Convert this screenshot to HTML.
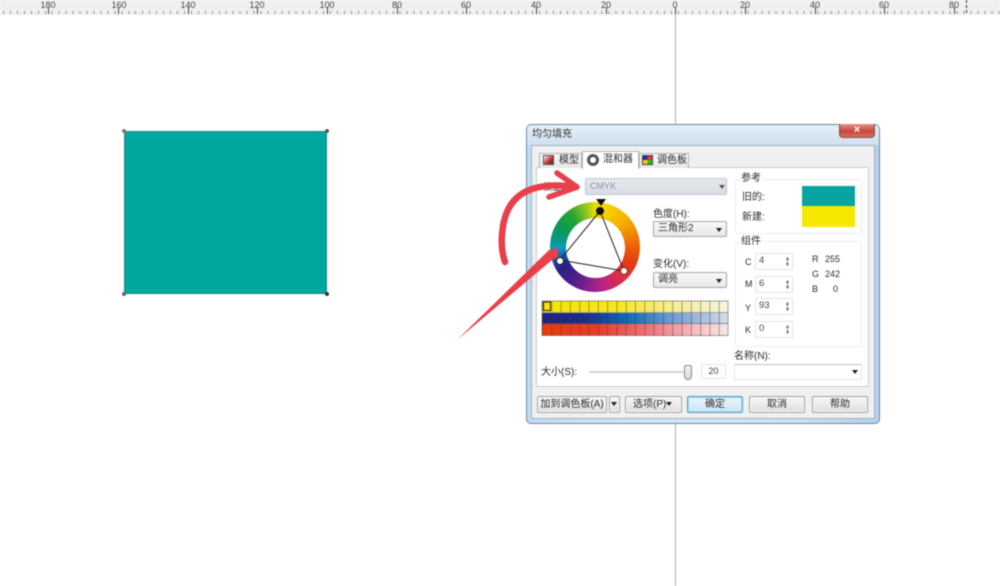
<!DOCTYPE html>
<html><head><meta charset="utf-8">
<style>
html,body{margin:0;padding:0;background:#fff;width:1000px;height:586px;overflow:hidden}
#w{position:relative;width:1000px;height:586px;overflow:hidden;font-family:"Liberation Sans","Noto Sans CJK SC",sans-serif;color:#333;filter:blur(.5px)}
#w div{position:absolute;box-sizing:border-box}
.t{font-size:10px;line-height:12px;white-space:nowrap;color:#2c2c2c}
.tick{background:repeating-linear-gradient(90deg,#666 0 1px,transparent 1px 6.96px)}
.rl{font-size:9px;line-height:10px;color:#444;font-family:"Liberation Sans",sans-serif;width:24px;text-align:center;top:0}
.maj{width:1px;height:7px;top:7px;background:#444}
.btn{border:1px solid #a2a2a2;border-radius:2px;background:linear-gradient(#f6f6f6,#ececec 50%,#dcdcdc);font-size:10px;line-height:15px;text-align:center;color:#2c2c2c;height:17px;top:396px;box-shadow:inset 0 0 0 1px #fafafa}
.combo{border:1px solid #a8a8a8;border-radius:2px;background:linear-gradient(#f8f8f8,#e8e8e8);font-size:10px;line-height:14px;padding-left:4px;color:#2c2c2c}
.ar{position:absolute;width:0;height:0;border-left:3px solid transparent;border-right:3px solid transparent;border-top:4px solid #222}
.spin{border:1px solid #e4e4e4;background:#fff;width:38px;height:17px;font-size:9.500px;line-height:13px;padding-left:3px;color:#444;font-family:"Liberation Sans",sans-serif}
.spin:after{content:"";position:absolute;right:3px;top:3px;width:3px;height:9px;background:#555;clip-path:polygon(50% 0,100% 30%,60% 30%,60% 70%,100% 70%,50% 100%,0 70%,40% 70%,40% 30%,0 30%)}
.g{border:1px solid #ececec;border-radius:3px;background:#fff}
</style></head><body><div id="w">

<!-- ruler -->
<div style="left:0;top:0;width:1000px;height:15px;background:#f0f0f0"></div>
<div class="tick" style="left:3px;top:11px;width:997px;height:3px;opacity:.7"></div>
<div class="maj" style="left:48px"></div><div class="rl" style="left:36px">180</div>
<div class="maj" style="left:118px"></div><div class="rl" style="left:107px">160</div>
<div class="maj" style="left:188px"></div><div class="rl" style="left:176px">140</div>
<div class="maj" style="left:257px"></div><div class="rl" style="left:245px">120</div>
<div class="maj" style="left:327px"></div><div class="rl" style="left:315px">100</div>
<div class="maj" style="left:397px"></div><div class="rl" style="left:385px">80</div>
<div class="maj" style="left:466px"></div><div class="rl" style="left:454px">60</div>
<div class="maj" style="left:536px"></div><div class="rl" style="left:524px">40</div>
<div class="maj" style="left:606px"></div><div class="rl" style="left:594px">20</div>
<div class="maj" style="left:675px"></div><div class="rl" style="left:663px">0</div>
<div class="maj" style="left:745px"></div><div class="rl" style="left:733px">20</div>
<div class="maj" style="left:815px"></div><div class="rl" style="left:803px">40</div>
<div class="maj" style="left:884px"></div><div class="rl" style="left:872px">60</div>
<div class="maj" style="left:954px"></div><div class="rl" style="left:942px">80</div>
<div style="left:966px;top:0;width:1px;height:13px;background:repeating-linear-gradient(#333 0 3px,transparent 3px 5px)"></div>

<!-- guide -->
<div style="left:675px;top:14px;width:1px;height:572px;background:#a9aeb3"></div>

<!-- teal rectangle -->
<div style="left:124px;top:131px;width:203px;height:163px;background:#00a8a0;border:1px solid #1f8a84"></div>
<div style="left:122px;top:129px;width:4px;height:4px;border-radius:50%;background:#777"></div>
<div style="left:325px;top:129px;width:4px;height:4px;border-radius:50%;background:#555"></div>
<div style="left:122px;top:292px;width:4px;height:4px;border-radius:50%;background:#666"></div>
<div style="left:325px;top:292px;width:4px;height:4px;border-radius:50%;background:#333"></div>

<!-- dialog -->
<div style="left:526px;top:124px;width:354px;height:300px;border:1px solid #6b8aa6;border-radius:5px;background:linear-gradient(90deg,#c4dcf0,#d5e6f4 40%,#cfe2f2 75%,#b5d2ea)"></div>
<div style="left:527px;top:125px;width:352px;height:20px;background:linear-gradient(#e4eff8,#cfe0ef);border-radius:4px 4px 0 0"></div>
<div class="t" style="left:532px;top:129px;color:#333">均匀填充</div>
<div style="left:839px;top:124px;width:36px;height:14px;border:1px solid #8c4a44;border-top:0;border-radius:0 0 4px 4px;background:linear-gradient(#e0958a,#c9473a 55%,#d8705f);color:#fff;font-size:11px;line-height:12px;text-align:center;font-weight:bold">×</div>
<div style="left:531px;top:145px;width:344px;height:274px;background:#f0f0f0;border:1px solid #9fb2c2"></div>

<!-- tabs -->
<div style="left:536px;top:167px;width:333px;height:220px;background:#fff;border:1px solid #cdcdcd"></div>
<div style="left:539px;top:153px;width:43px;height:15px;background:linear-gradient(#f6f6f6,#e6e6e6);border:1px solid #b4b4b4;border-bottom:0"></div>
<div style="left:639px;top:153px;width:50px;height:15px;background:linear-gradient(#f6f6f6,#e6e6e6);border:1px solid #b4b4b4;border-bottom:0"></div>
<div style="left:582px;top:151px;width:57px;height:18px;background:#fff;border:1px solid #b4b4b4;border-bottom:0"></div>
<div style="left:543px;top:155px;width:11px;height:10px;background:linear-gradient(135deg,#fff,#c33 55%,#333);border:1px solid #555"></div>
<div class="t" style="left:559px;top:155px">模型</div>
<div style="left:587px;top:154px;width:12px;height:12px;border-radius:50%;background:#55554e"></div>
<div style="left:590px;top:157px;width:6px;height:6px;border-radius:50%;background:#fff"></div>
<div class="t" style="left:603px;top:154px">混和器</div>
<div style="left:642px;top:155px;width:11px;height:10px;background:conic-gradient(#e33 25%,#2b2 0 50%,#fc0 0 75%,#23a 0);border:1px solid #444"></div>
<div class="t" style="left:657px;top:155px">调色板</div>

<!-- model combo -->
<div class="t" style="left:543px;top:181px;font-size:9px;color:#111">模型(L):</div>
<div style="left:585px;top:178px;width:142px;height:17px;background:linear-gradient(#e6e9ee,#d8dde4);border:1px solid #c2c7d0;border-radius:2px;font-size:9px;line-height:15px;padding-left:4px;color:#8a93a6">CMYK</div>
<span class="ar" style="left:719px;top:185px;border-top-color:#555"></span>

<!-- wheel -->
<div style="left:550px;top:202px;width:90px;height:90px;border-radius:50%;background:conic-gradient(#e8e000 0deg,#f8d400 15deg,#f6ac00 50deg,#ec6a08 85deg,#e63c12 112deg,#e23038 135deg,#c22480 165deg,#84208e 190deg,#4a1e8c 215deg,#2a1f86 238deg,#1262b8 255deg,#0e98c4 268deg,#089a88 280deg,#0a9a50 300deg,#2aa52e 325deg,#9cc820 348deg,#e8e000 360deg)"></div>
<div style="left:566px;top:218px;width:59px;height:60px;border-radius:50%;background:#fff"></div>
<svg style="position:absolute;left:0;top:0" width="1000" height="586">
<polygon points="600,211 560,260 624,271" fill="none" stroke="#222" stroke-width="1"/>
<circle cx="600" cy="211" r="4" fill="#111"/>
<circle cx="560" cy="261" r="3.500" fill="#fff" stroke="#222"/>
<circle cx="624" cy="271" r="3.500" fill="#fff" stroke="#7a2a10"/>
<polygon points="596,199 606,199 601,206" fill="#111"/>
</svg>

<!-- hue / variation -->
<div class="t" style="left:653px;top:209px">色度(H):</div>
<div class="combo" style="left:653px;top:221px;width:74px;height:16px">三角形2</div>
<span class="ar" style="left:716px;top:228px"></span>
<div class="t" style="left:653px;top:259px">变化(V):</div>
<div class="combo" style="left:653px;top:272px;width:74px;height:16px">调亮</div>
<span class="ar" style="left:716px;top:279px"></span>

<!-- palette -->
<svg style="position:absolute;left:0;top:0" width="1000" height="586">
<defs>
<linearGradient id="a"><stop offset="0" stop-color="#f6e500"/><stop offset=".4" stop-color="#f6e620"/><stop offset=".72" stop-color="#f6ee96"/><stop offset="1" stop-color="#f6f4e0"/></linearGradient>
<linearGradient id="b"><stop offset="0" stop-color="#262080"/><stop offset=".22" stop-color="#1c2a88"/><stop offset=".45" stop-color="#0f68b4"/><stop offset=".7" stop-color="#6e9cd0"/><stop offset="1" stop-color="#d8dce8"/></linearGradient>
<linearGradient id="c"><stop offset="0" stop-color="#e83c0c"/><stop offset=".3" stop-color="#e63c28"/><stop offset=".6" stop-color="#f07a80"/><stop offset=".85" stop-color="#f8c4c8"/><stop offset="1" stop-color="#f4e8e8"/></linearGradient>
<pattern id="p" x="542" y="0" width="9.300" height="586" patternUnits="userSpaceOnUse"><line x1=".5" y1="0" x2=".5" y2="586" stroke="#3c3c3c" stroke-opacity=".45"/></pattern>
</defs>
<rect x="542" y="301" width="186" height="11" fill="url(#a)"/>
<rect x="542" y="313" width="186" height="11" fill="url(#b)"/>
<rect x="542" y="324" width="186" height="11.500" fill="url(#c)"/>
<rect x="542" y="301" width="186" height="35" fill="url(#p)"/>
<path d="M542 301H728V335.500H542ZM542 312.500H728M542 323.500H728" fill="none" stroke="#555" stroke-opacity=".55"/>
<rect x="543.500" y="302" width="7" height="8.500" fill="#f6e500" stroke="#222"/>
</svg>

<!-- size -->
<div class="t" style="left:541px;top:367px">大小(S):</div>
<div style="left:589px;top:371px;width:100px;height:2px;background:#d6d6d6"></div>
<div style="left:684px;top:365px;width:8px;height:15px;border:1px solid #8a8a8a;border-radius:2px 2px 4px 4px;background:linear-gradient(#f4f4f4,#d8d8d8)"></div>
<div style="left:701px;top:364px;width:25px;height:15px;border:1px solid #e4e4e4;background:#fff;font-size:9px;line-height:13px;text-align:center;font-family:'Liberation Sans',sans-serif;color:#444">20</div>

<!-- reference -->
<div class="g" style="left:735px;top:179px;width:127px;height:55px"></div>
<div class="t" style="left:740px;top:173px;background:#fff;padding:0 1px">参考</div>
<div class="t" style="left:742px;top:192px">旧的:</div>
<div class="t" style="left:742px;top:212px">新建:</div>
<div style="left:802px;top:186px;width:53px;height:20px;background:#08a4a2"></div>
<div style="left:802px;top:206px;width:53px;height:21px;background:#f6e800"></div>

<!-- components -->
<div class="g" style="left:735px;top:241px;width:127px;height:106px"></div>
<div class="t" style="left:740px;top:236px;background:#fff;padding:0 1px">组件</div>
<div class="t" style="left:745px;top:256px;font-size:9px">C</div><div class="spin" style="left:755px;top:253px">4</div>
<div class="t" style="left:745px;top:278px;font-size:9px">M</div><div class="spin" style="left:755px;top:276px">6</div>
<div class="t" style="left:745px;top:302px;font-size:9px">Y</div><div class="spin" style="left:755px;top:298px">93</div>
<div class="t" style="left:745px;top:324px;font-size:9px">K</div><div class="spin" style="left:755px;top:321px">0</div>
<div class="t" style="left:812px;top:253px;font-size:9px">R</div><div class="t" style="left:825px;top:253px;font-size:9px">255</div>
<div class="t" style="left:812px;top:268px;font-size:9px">G</div><div class="t" style="left:825px;top:268px;font-size:9px">242</div>
<div class="t" style="left:812px;top:283px;font-size:9px">B</div><div class="t" style="left:833px;top:283px;font-size:9px">0</div>

<!-- name -->
<div class="t" style="left:734px;top:351px">名称(N):</div>
<div style="left:734px;top:364px;width:128px;height:16px;border:1px solid #e6e6e6;border-top-color:#c4c4c4;background:#fff"></div>
<span class="ar" style="left:852px;top:370px"></span>

<!-- buttons -->
<div class="btn" style="left:537px;width:70px">加到调色板(A)</div>
<div class="btn" style="left:609px;width:11px"></div>
<span class="ar" style="left:611px;top:402px"></span>
<div class="btn" style="left:625px;width:57px;text-align:left;padding-left:7px">选项(P)</div>
<span class="ar" style="left:666px;top:402px"></span>
<div class="btn" style="left:687px;width:56px;border-color:#4f9cc8;background:linear-gradient(#e8f4fa,#cfe6f2);box-shadow:inset 0 0 0 1px #a8dcf0">确定</div>
<div class="btn" style="left:749px;width:56px">取消</div>
<div class="btn" style="left:812px;width:56px">帮助</div>

<!-- red annotation -->
<svg style="position:absolute;left:0;top:0" width="1000" height="586">
<path d="M505 262C501 250 501 238 503 226C506 208 514 197 527 191C542 184 560 185 576 187" fill="none" stroke="#e8404a" stroke-width="6.500" stroke-linecap="round"/>
<path d="M557 173L577 187L549 197" fill="none" stroke="#e8404a" stroke-width="5.500" stroke-linecap="round" stroke-linejoin="round"/>
<polygon points="457,340 549,250 558,248 558,257 552,260" fill="#e8404a"/>
</svg>
</div></body></html>
